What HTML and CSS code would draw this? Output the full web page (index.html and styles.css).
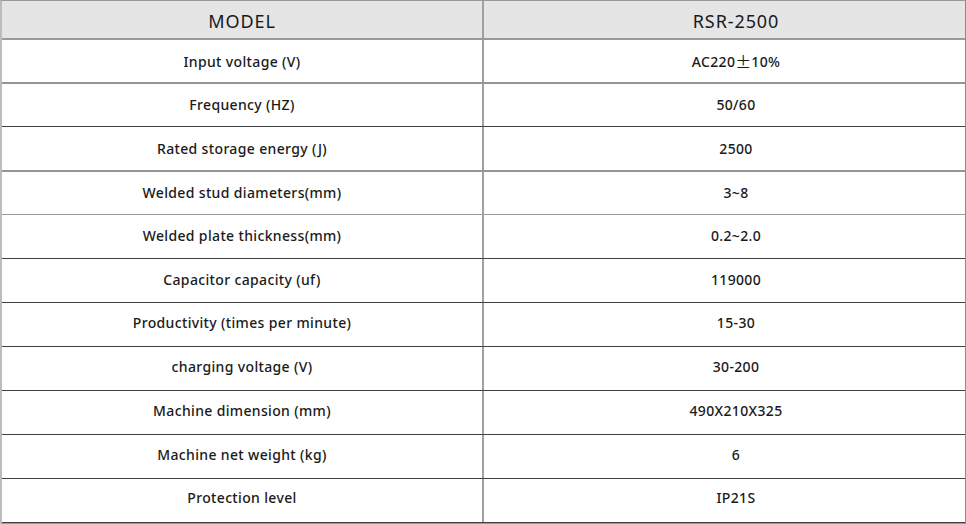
FILE: index.html
```html
<!DOCTYPE html>
<html>
<head>
<meta charset="utf-8">
<link rel="stylesheet" href="styles.css">
</head>
<body>
<div class="spec">
  <div class="row head">
    <div class="cell">MODEL</div>
    <div class="cell">RSR-2500</div>
  </div>
  <div class="row gray2">
    <div class="cell">Input voltage (V)</div>
    <div class="cell">AC220<span class="pm">±</span>10%</div>
  </div>
  <div class="row dark h43">
    <div class="cell">Frequency (HZ)</div>
    <div class="cell">50/60</div>
  </div>
  <div class="row gray2 h45">
    <div class="cell">Rated storage energy (J)</div>
    <div class="cell">2500</div>
  </div>
  <div class="row gray1 h43 up1">
    <div class="cell">Welded stud diameters(mm)</div>
    <div class="cell">3~8</div>
  </div>
  <div class="row dark">
    <div class="cell">Welded plate thickness(mm)</div>
    <div class="cell">0.2~2.0</div>
  </div>
  <div class="row dark">
    <div class="cell">Capacitor capacity (uf)</div>
    <div class="cell">119000</div>
  </div>
  <div class="row dark up3">
    <div class="cell">Productivity (times per minute)</div>
    <div class="cell">15-30</div>
  </div>
  <div class="row dark up3">
    <div class="cell">charging voltage (V)</div>
    <div class="cell">30-200</div>
  </div>
  <div class="row dark up3">
    <div class="cell">Machine dimension (mm)</div>
    <div class="cell">490X210X325</div>
  </div>
  <div class="row dark up3">
    <div class="cell">Machine net weight (kg)</div>
    <div class="cell">6</div>
  </div>
  <div class="row dark up4">
    <div class="cell">Protection level</div>
    <div class="cell">IP21S</div>
  </div>
  <div class="row last">
    <div class="cell"></div>
    <div class="cell"></div>
  </div>
</div>
</body>
</html>
```

FILE: styles.css
```css
html, body {
  margin: 0;
  padding: 0;
  background: #ffffff;
}

.spec {
  width: 966px;
  box-sizing: border-box;
  border-top: 1px solid #999999;
  border-left: 2px solid #bcbcbc;
  border-right: 1px solid #8a8a8a;
  font-family: "Noto Sans", "Open Sans", sans-serif;
  color: #1a1a1a;
}

.row {
  display: grid;
  grid-template-columns: 482px 1fr;
  height: 44px;
  box-sizing: border-box;
}

.cell {
  display: flex;
  align-items: center;
  justify-content: center;
  font-size: 14px;
  font-weight: 500;
  letter-spacing: 0.35px;
  white-space: pre;
}

.cell:first-child {
  box-sizing: border-box;
  border-right: 2px solid #a0a0a0;
}

.cell:last-child {
  padding-left: 23px;
}

.dark .cell {
  padding-bottom: 2px;
}

.up1 .cell {
  padding-bottom: 2px;
}

.up3 .cell {
  padding-bottom: 4px;
}

.up4 .cell {
  padding-bottom: 6px;
}

.pm {
  font-family: "Noto Sans CJK SC", sans-serif;
  font-weight: 400;
  font-size: 16px;
  letter-spacing: 0;
}

.head {
  height: 39px;
  background: #e5e5e5;
  border-bottom: 2px solid #9a9a9a;
}

.head .cell {
  font-size: 18px;
  font-weight: 400;
  letter-spacing: 0.9px;
  padding-top: 2px;
}

.gray2 {
  border-bottom: 2px solid #959595;
}

.gray1 {
  border-bottom: 1px solid #9a9a9a;
}

.dark {
  border-bottom: 1px solid #404040;
}

.h43 {
  height: 43px;
}

.h45 {
  height: 45px;
}

.last {
  height: 1px;
  border-bottom: 1px solid #9a9a9a;
}
```
